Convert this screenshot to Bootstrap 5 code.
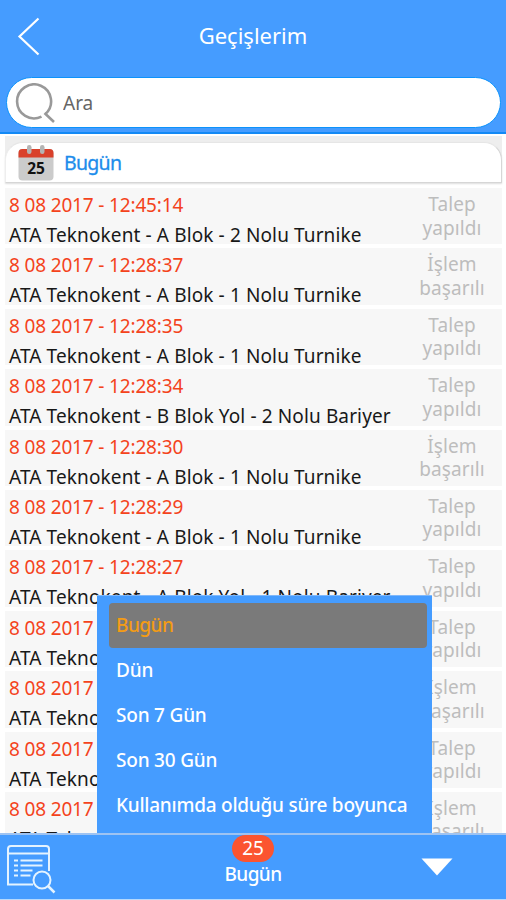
<!DOCTYPE html>
<html lang="tr">
<head>
<meta charset="utf-8">
<meta name="viewport" content="width=device-width, initial-scale=1">
<title>Geçişlerim</title>
<link rel="stylesheet" href="https://cdn.jsdelivr.net/npm/bootstrap@5.3.0/dist/css/bootstrap.min.css">
<style>
  body { font-family: "Noto Sans", "Open Sans", sans-serif; background: #fff; color: #181818; }
  .screen { height: 900px; }
  .topbar { height: 134px; background: #459cff; border-bottom: 2px solid #1389f5; }
  .title-row { height: 77px; padding: 0 17px; }
  .title-row h1 { font-size: 22px; line-height: 30px; padding-top: 20px; }
  .back { margin-top: 17px; }
  .side { width: 24px; }
  .search { height: 51px; margin: 0 5px 0 6px; border: 1px solid #0d93fb; border-radius: 26px; padding-left: 8px; }
  .search input { font-size: 19px; color: #555; background: none; outline: 0; margin-left: 8px; padding: 1px 0 0; }
  .search input::placeholder { color: #666; opacity: 1; }
  .feed { padding: 2px 4px 0 5px; }
  .group-wrap { background: #eee; padding-top: 6px; }
  .group-head { height: 41px; background: #fff; border: 1px solid #d6d6d6; border-top-color: #e6e6e6; border-left-color: #eee; border-radius: 18px 18px 0 0; padding-left: 12px; color: #1c8ceb; font-size: 19.5px; letter-spacing: -.7px; box-shadow: 0 1px 2px #ddd; }
  .group-head span { margin-left: 10px; -webkit-text-stroke: .3px #1c8ceb; }
  .log { padding-top: 5px; gap: 4px; }
  .entry { height: 56.4px; background: #f7f7f7; padding-left: 4px; flex-shrink: 0; }
  .when { font-size: 19px; line-height: 30px; color: #f4431c; letter-spacing: -.16px; padding-top: 2px; }
  .where { font-size: 19px; line-height: 30px; letter-spacing: .12px; white-space: nowrap; }
  .state { width: 100px; font-size: 19px; line-height: 23.500px; letter-spacing: .1px; color: #bdbdbd; padding-top: 5px; }
  .period { position: absolute; left: 97px; bottom: 0; width: 335px; height: 238px; background: #459cff; padding: 7px 5px 0 12px; border-top: 1px solid #7fb8fb; }
  .period a { height: 45px; padding: 0 7px; color: #fff; font-size: 19px; font-weight: 500; letter-spacing: -.2px; border-radius: 4px; text-decoration: none; }
  .period a.chosen { background: #7a7a7a; color: #f49c14; letter-spacing: -.5px; }
  .period .long { letter-spacing: -.24px; }
  .bottombar { height: 67px; background: #459cff; border-top: 2px solid #9ec3f2; border-bottom: 1px solid #b5d9fd; padding: 0 5px; }
  .count { background: #fb5430; border-radius: 14px; width: 42px; height: 27px; font-size: 19px; line-height: 27px; }
  .bottombar .label { font-size: 19px; line-height: 25px; font-weight: 500; letter-spacing: -.6px; }
  .third { flex: 1 1 0; }
</style>
</head>
<body>
<div class="screen d-flex flex-column overflow-hidden">
  <header class="topbar flex-shrink-0">
    <div class="title-row d-flex justify-content-between align-items-start">
      <svg class="back" width="24" height="40" viewBox="0 0 24 40" fill="none" stroke="#fff" stroke-width="2.2"><path d="M21.500 1.500 2.500 19.500 21.500 37.500"/></svg>
      <h1 class="m-0 fw-normal text-white">Geçişlerim</h1>
      <span class="side"></span>
    </div>
    <div class="search bg-white d-flex align-items-center">
      <svg width="40" height="40" viewBox="0 0 40 40" fill="none" stroke="#999" stroke-width="2.600"><path d="M26.500 33.700A17 17 0 1 1 30.500 31M29.500 30L39 39"/></svg>
      <input class="border-0 flex-grow-1" type="text" placeholder="Ara" aria-label="Ara">
    </div>
  </header>

  <main class="feed flex-grow-1 position-relative overflow-hidden d-flex flex-column">
    <div class="group-wrap flex-shrink-0">
      <div class="group-head d-flex align-items-center">
        <svg width="36" height="36" viewBox="0 0 36 36">
          <rect x=".5" y="4" width="35" height="31.500" rx="4" fill="#cbcbcb"/>
          <path d="M.5 12.500V8a4 4 0 0 1 4-4h27a4 4 0 0 1 4 4v4.500z" fill="#d9412b"/>
          <rect x="9" y="0" width="4.500" height="9" rx="2.200" fill="#b4b4b4"/>
          <rect x="22" y="0" width="4.500" height="9" rx="2.200" fill="#b4b4b4"/>
          <text x="18" y="28.500" text-anchor="middle" font-family="Noto Sans, sans-serif" font-size="15.500" font-weight="700" letter-spacing="0" fill="#111">25</text>
        </svg>
        <span>Bugün</span>
      </div>
    </div>
    <div class="log d-flex flex-column">
      <div class="entry d-flex"><div class="flex-grow-1"><div class="when">8 08 2017 - 12:45:14</div><div class="where">ATA Teknokent - A Blok - 2 Nolu Turnike</div></div><div class="state text-center">Talep<br>yapıldı</div></div>
      <div class="entry d-flex"><div class="flex-grow-1"><div class="when">8 08 2017 - 12:28:37</div><div class="where">ATA Teknokent - A Blok - 1 Nolu Turnike</div></div><div class="state text-center">İşlem<br>başarılı</div></div>
      <div class="entry d-flex"><div class="flex-grow-1"><div class="when">8 08 2017 - 12:28:35</div><div class="where">ATA Teknokent - A Blok - 1 Nolu Turnike</div></div><div class="state text-center">Talep<br>yapıldı</div></div>
      <div class="entry d-flex"><div class="flex-grow-1"><div class="when">8 08 2017 - 12:28:34</div><div class="where">ATA Teknokent - B Blok Yol - 2 Nolu Bariyer</div></div><div class="state text-center">Talep<br>yapıldı</div></div>
      <div class="entry d-flex"><div class="flex-grow-1"><div class="when">8 08 2017 - 12:28:30</div><div class="where">ATA Teknokent - A Blok - 1 Nolu Turnike</div></div><div class="state text-center">İşlem<br>başarılı</div></div>
      <div class="entry d-flex"><div class="flex-grow-1"><div class="when">8 08 2017 - 12:28:29</div><div class="where">ATA Teknokent - A Blok - 1 Nolu Turnike</div></div><div class="state text-center">Talep<br>yapıldı</div></div>
      <div class="entry d-flex"><div class="flex-grow-1"><div class="when">8 08 2017 - 12:28:27</div><div class="where">ATA Teknokent - A Blok Yol - 1 Nolu Bariyer</div></div><div class="state text-center">Talep<br>yapıldı</div></div>
      <div class="entry d-flex"><div class="flex-grow-1"><div class="when">8 08 2017</div><div class="where">ATA Teknokent</div></div><div class="state text-center">Talep<br>yapıldı</div></div>
      <div class="entry d-flex"><div class="flex-grow-1"><div class="when">8 08 2017</div><div class="where">ATA Teknokent</div></div><div class="state text-center">İşlem<br>başarılı</div></div>
      <div class="entry d-flex"><div class="flex-grow-1"><div class="when">8 08 2017</div><div class="where">ATA Teknokent</div></div><div class="state text-center">Talep<br>yapıldı</div></div>
      <div class="entry d-flex"><div class="flex-grow-1"><div class="when">8 08 2017</div><div class="where">ATA Teknokent</div></div><div class="state text-center">İşlem<br>başarılı</div></div>
    </div>
    <nav class="period d-flex flex-column">
      <a class="chosen d-flex align-items-center" href="#">Bugün</a>
      <a class="d-flex align-items-center" href="#">Dün</a>
      <a class="d-flex align-items-center" href="#">Son 7 Gün</a>
      <a class="d-flex align-items-center" href="#">Son 30 Gün</a>
      <a class="d-flex align-items-center text-nowrap" href="#"><span class="long">Kullanımda olduğu süre boyunca</span></a>
    </nav>
  </main>

  <footer class="bottombar flex-shrink-0 d-flex text-white">
    <div class="third pt-2">
      <svg width="52" height="52" viewBox="0 0 52 52" fill="none" stroke="#e4f3ff" stroke-width="2">
        <path d="M28 41.500H3V6a3 3 0 0 1 3-3h35a3 3 0 0 1 3 3v22M3 10.500h41"/>
        <path stroke-width="2.200" d="M9 17.500h4M15.500 17.500h22M9 22.500h4M15.500 22.500h22M9 27.500h4M15.500 27.500h12M9 32.500h4M15.500 32.500h10"/>
        <circle cx="37" cy="37" r="8.500"/><path stroke-width="2.500" d="m43 43 6.500 6.500"/>
      </svg>
    </div>
    <div class="d-flex flex-column align-items-center">
      <div class="count text-center">25</div>
      <div class="label">Bugün</div>
    </div>
    <div class="third d-flex align-items-center justify-content-end">
      <svg class="me-5" width="32" height="18" viewBox="0 0 32 18"><path d="M.5.5h31L16 17.500z" fill="#fff"/></svg>
    </div>
  </footer>
</div>
<script src="https://cdn.jsdelivr.net/npm/bootstrap@5.3.0/dist/js/bootstrap.bundle.min.js"></script>
</body>
</html>
